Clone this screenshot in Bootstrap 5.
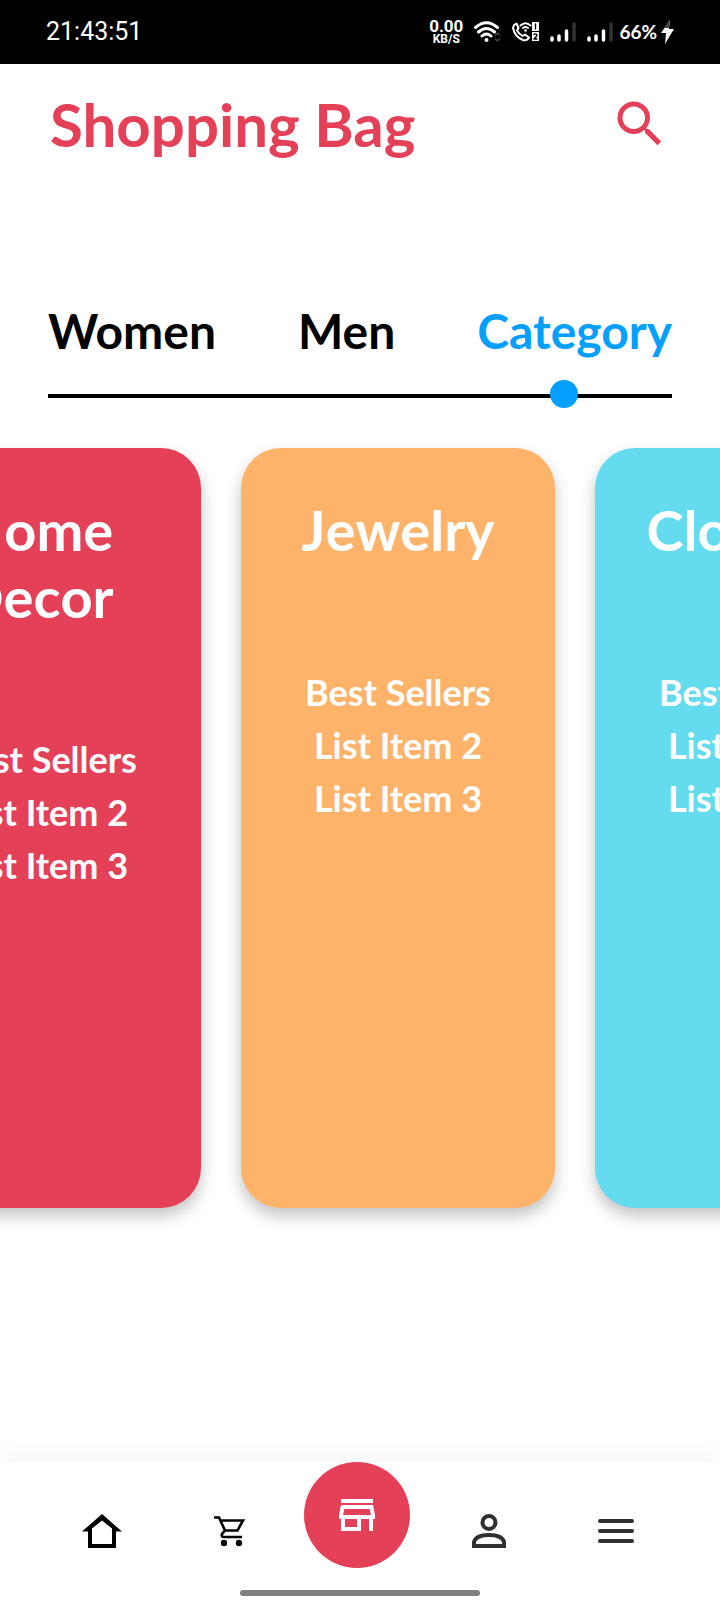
<!DOCTYPE html>
<html lang="en">
<head>
<meta charset="utf-8">
<meta name="viewport" content="width=device-width, initial-scale=1">
<title>Shopping Bag</title>
<link href="https://cdn.jsdelivr.net/npm/bootstrap@5.3.0/dist/css/bootstrap.min.css" rel="stylesheet">
<style>
  body { font-family: Lato, sans-serif; background: #fff; color: #000; }
  .status-bar { height: 64px; padding: 0 46px; background: #000; color: #fff; font-family: Roboto, sans-serif; }
  .clock { font-size: 25px; line-height: 32px; }
  .net-speed { font-weight: 700; font-size: 17px; line-height: 14px; }
  .net-unit { font-size: 12px; line-height: 12px; }
  .battery { font-family: Lato, sans-serif; font-weight: 700; font-size: 19px; line-height: 24px; }
  .status-icons { gap: 11px; }
  .signal-group { gap: 6px; }
  .page-head { padding: 24px 50px 0; }
  .page-title { font-size: 60px; line-height: 72px; font-weight: 700; color: #e44159; }
  .search-btn { color: #e44159; }
  .tab-area { margin-top: 142px; padding: 0 48px; }
  .tab-link { font-size: 48px; line-height: 58px; font-weight: 700; color: #000; text-decoration: none; }
  .tab-link.active { color: #059fff; }
  .tab-track { height: 4px; margin-top: 34px; background: #000; }
  .tab-dot { width: 28px; height: 28px; right: 15%; top: -14px; background: #059fff; }
  .carousel-strip { overflow: hidden; padding: 50px 0; }
  .carousel-cards { gap: 40px; margin-left: -113px; }
  .category-card { flex: 0 0 314px; min-height: 760px; padding: 48px; border-radius: 40px; color: #fff; box-shadow: 0 8px 16px rgba(0,0,0,.24); }
  .category-card h2 { font-size: 56px; line-height: 67px; font-weight: 700; margin-bottom: 103px; font-kerning: none; white-space: break-spaces; }
  .category-card li { font-size: 36px; line-height: 53px; font-weight: 700; }
  .bg-rose { background: #e44159; }
  .bg-apricot { background: #fdb36a; }
  .bg-aqua { background: #64dbef; }
  .bottom-nav { background: #fff; box-shadow: 0 -6px 30px rgba(0,0,0,.04); }
  .nav-slots { padding: 0 40px 0 38px; height: 128px; }
  .nav-slot { padding-bottom: 20px; }
  .nav-icon { padding: 0; height: 78px; line-height: 0; color: #000; }
  .nav-soft { color: #303030; }
  .shop-btn { width: 106px; height: 106px; background: #e44159; color: #fff; }
  .home-bar { width: 240px; height: 6px; margin-bottom: 4px; background: #808080; }
</style>
</head>
<body class="d-flex flex-column min-vh-100 overflow-x-hidden">
<header class="status-bar d-flex align-items-center justify-content-between">
  <div class="clock">21:43:51</div>
  <div class="status-icons d-flex align-items-center">
    <div class="net-speed text-center"><div>0.00</div><div class="net-unit">KB/S</div></div>
    <svg width="27" height="22" viewBox="0 0 27 22" fill="none" stroke="#fff" stroke-width="3" stroke-linecap="round"><path d="M1.5 6.5Q12.500-3 23.500 6.500M4.500 11Q12.500 4 20.500 11M8 15Q12.500 11 17 15"/><circle cx="12.500" cy="19" r="2" fill="#fff" stroke="none"/><path d="M21.500 14L23.500 12L25.500 14M21.500 18L23.500 20L25.500 18" stroke="#444" stroke-width="1.500"/></svg>
    <svg width="27" height="20" viewBox="0 0 27 20" fill="none" stroke="#fff" stroke-width="2" stroke-linejoin="round" stroke-linecap="round"><path d="M2 3L4.500 1.500L6.500 6L5 8.500Q7 12 10.500 14L13 12.500L17 15.500Q15 19 11 18Q3 15 1 6Z"/><path d="M8.500 3.500Q13.500-1 18.500 3.500M11 6Q13.500 4 16 6"/><circle cx="13.500" cy="8.500" r="1.300" fill="#fff" stroke="none"/><path d="M20 0h7v9h-7zM20 10h7v9h-7z" fill="#fff" stroke="none"/><path d="M23.500 2v5M22 12.500Q24 11 25 13Q24.500 15 22 17H25" stroke="#000" stroke-width="1.300"/></svg>
    <svg width="26" height="20" viewBox="0 0 26 20" stroke="#fff" stroke-width="3.500" stroke-linecap="round"><path d="M2 16v2M9 14v4M16.500 9v9"/><path d="M24 2v16" stroke="#333"/></svg>
    <div class="signal-group d-flex align-items-center">
      <svg width="26" height="20" viewBox="0 0 26 20" stroke="#fff" stroke-width="3.500" stroke-linecap="round"><path d="M2 16v2M9 14v4M16.500 9v9"/><path d="M24 2v16" stroke="#333"/></svg>
      <div class="d-flex align-items-center gap-1 battery">
        <span>66%</span>
        <svg width="13" height="24" viewBox="0 0 13 24"><path d="M8 8L9 0L0 13H5L4 24L13 9H8Z" fill="#fff"/><path d="M9 0L3.500 8H8.200Z" fill="#444"/></svg>
      </div>
    </div>
  </div>
</header>

<main>
  <div class="page-head d-flex align-items-center justify-content-between">
    <h1 class="page-title m-0">Shopping Bag</h1>
    <button type="button" class="btn search-btn p-0 border-0 lh-1" aria-label="Search">
      <svg class="d-block" width="60" height="60" viewBox="0 0 24 24" fill="currentColor"><path d="M15.500 14h-.79l-.28-.27A6.471 6.471 0 0 0 16 9.500 6.500 6.500 0 1 0 9.500 16c1.610 0 3.090-.59 4.230-1.570l.27.28v.79l5 4.990L20.490 19l-4.990-5zm-6 0C7.010 14 5 11.990 5 9.500S7.010 5 9.500 5 14 7.010 14 9.500 11.990 14 9.500 14z"/></svg>
    </button>
  </div>

  <div class="tab-area">
    <nav class="d-flex justify-content-between" aria-label="Sections">
      <a class="tab-link" href="#women">Women</a>
      <a class="tab-link" href="#men">Men</a>
      <a class="tab-link active" href="#category" aria-current="page">Category</a>
    </nav>
    <div class="tab-track position-relative"><span class="tab-dot position-absolute rounded-circle"></span></div>
  </div>

  <div class="carousel-strip">
    <div class="carousel-cards d-flex">
      <section class="category-card bg-rose text-center">
        <h2>Home Decor </h2>
        <ul class="list-unstyled m-0 text-nowrap"><li>Best Sellers</li><li>List Item 2</li><li>List Item 3</li></ul>
      </section>
      <section class="category-card bg-apricot text-center">
        <h2>Jewelry</h2>
        <ul class="list-unstyled m-0 text-nowrap"><li>Best Sellers</li><li>List Item 2</li><li>List Item 3</li></ul>
      </section>
      <section class="category-card bg-aqua text-center">
        <h2>Clothing</h2>
        <ul class="list-unstyled m-0 text-nowrap"><li>Best Sellers</li><li>List Item 2</li><li>List Item 3</li></ul>
      </section>
    </div>
  </div>
</main>

<nav class="bottom-nav mt-auto" aria-label="Main">
  <div class="nav-slots d-flex">
    <div class="col nav-slot d-flex justify-content-center align-items-end">
      <button type="button" class="btn border-0 nav-icon" aria-label="Home">
        <svg width="40" height="40" viewBox="0 0 40 40"><path fill="currentColor" fill-rule="evenodd" d="M20 3L40 20.500H34V37H6V20.500H0ZM20 9.500L10 17.500V33H30V17.500Z"/></svg>
      </button>
    </div>
    <div class="col nav-slot d-flex justify-content-center align-items-end">
      <button type="button" class="btn border-0 nav-icon" aria-label="Cart">
        <svg width="36" height="40" viewBox="0 0 36 40" fill="none" stroke="currentColor" stroke-width="2.600"><path d="M3 6.500H8L14 19.500L11 23Q10 26 13 26H31M9 9.500H32L26.500 19.500H14"/><circle cx="13" cy="32" r="3.200" fill="currentColor" stroke="none"/><circle cx="28" cy="32" r="3.200" fill="currentColor" stroke="none"/></svg>
      </button>
    </div>
    <div class="col d-flex justify-content-center align-items-start pe-1">
      <button type="button" class="btn border-0 shop-btn rounded-circle p-0" aria-label="Shop">
        <svg width="48" height="48" viewBox="0 0 24 24" fill="currentColor"><path d="M18.360 9l.6 3H5.040l.6-3h12.720M20 4H4v2h16V4zm0 3H4l-1 5v2h1v6h10v-6h4v6h2v-6h1v-2l-1-5zM6 18v-4h6v4H6z"/></svg>
      </button>
    </div>
    <div class="col nav-slot d-flex justify-content-center align-items-end">
      <button type="button" class="btn border-0 nav-icon nav-soft" aria-label="Account">
        <svg width="36" height="40" viewBox="0 0 36 40" fill="none" stroke="currentColor" stroke-width="4"><circle cx="18" cy="11.500" r="6.500"/><path d="M3 35V31Q5 24 18 24T33 31V35Z"/></svg>
      </button>
    </div>
    <div class="col nav-slot d-flex justify-content-center align-items-end">
      <button type="button" class="btn border-0 nav-icon nav-soft" aria-label="Menu">
        <svg width="36" height="40" viewBox="0 0 36 40" stroke="currentColor" stroke-width="4" stroke-linecap="round"><path d="M2 10H34M2 20H34M2 30H34"/></svg>
      </button>
    </div>
  </div>
  <div class="home-bar rounded-pill mx-auto"></div>
</nav>
<script src="https://cdn.jsdelivr.net/npm/bootstrap@5.3.0/dist/js/bootstrap.bundle.min.js"></script>
</body>
</html>
